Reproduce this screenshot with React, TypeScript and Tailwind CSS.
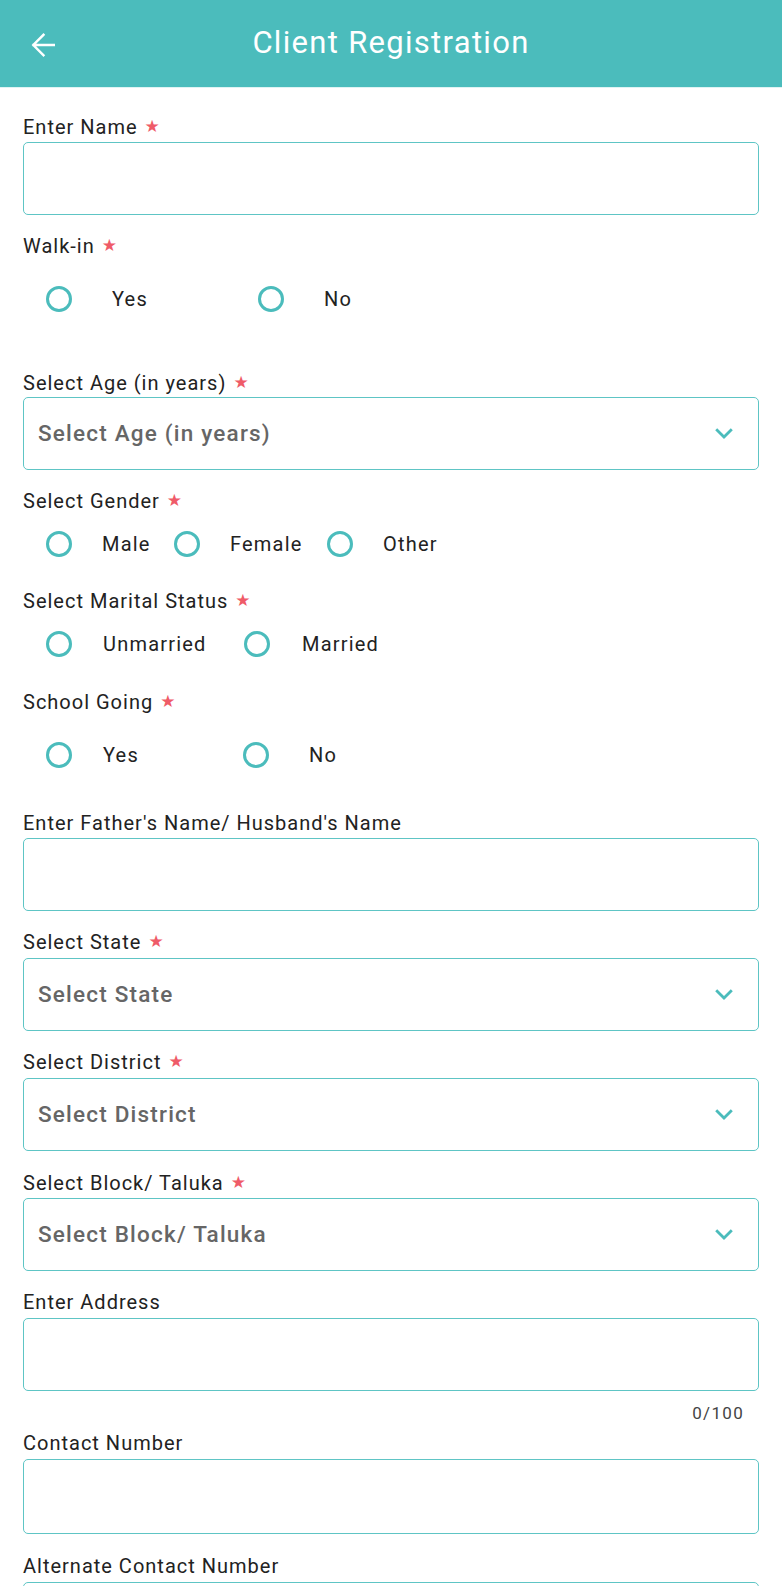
import React from "react";

const Star = () => (
  <span
    className="ml-[7px] text-[17px] text-[#ef5b68] leading-none relative top-[-1px]"
    style={{ fontFamily: '"DejaVu Sans", sans-serif' }}
  >
    ★
  </span>
);

const Label = ({ text, req, className = "" }: { text: string; req?: boolean; className?: string }) => (
  <div className={`flex items-center h-[24px] text-[20px] tracking-[1px] text-[#222] leading-[24px] ${className}`}>
    <span>{text}</span>
    {req && <Star />}
  </div>
);

const Input = ({ className = "" }: { className?: string }) => (
  <div className={`h-[73px] rounded-[5px] border-[1.5px] border-[#5ec5c5] bg-white ${className}`} />
);

const Select = ({ text, className = "" }: { text: string; className?: string }) => (
  <div
    className={`h-[73px] rounded-[5px] border-[1.5px] border-[#5ec5c5] bg-white flex items-center justify-between pl-[14px] pr-[25px] ${className}`}
  >
    <span className="text-[22.5px] tracking-[1.2px] font-medium text-[#666]">{text}</span>
    <svg width="18" height="12" viewBox="0 0 18 12" fill="none">
      <path d="M2.2 2.2 L9 9 L15.8 2.2" stroke="#4bbcbc" strokeWidth="2.8" strokeLinecap="square" />
    </svg>
  </div>
);

const Radio = ({ label, width, gap }: { label: string; width: string; gap: string }) => (
  <div className={`flex items-center ${width}`}>
    <div className="w-[26px] h-[26px] rounded-full border-[3px] border-[#4bbcbc] shrink-0" />
    <span className={`${gap} text-[20px] tracking-[1.2px] text-[#222]`}>{label}</span>
  </div>
);

export default function App() {
  return (
    <div
      className="w-[782px] h-[1586px] overflow-hidden bg-white"
      style={{ fontFamily: 'Roboto, "Liberation Sans", sans-serif' }}
    >
      <header className="h-[88px] bg-[#4bbcbc] border-b border-[#dff3f3] flex items-center justify-center relative">
        <div className="absolute left-[31px] top-[33px]">
          <svg width="24" height="24" viewBox="0 0 24 24" fill="none">
            <path d="M23 12H2.5 M12.5 1.8 L2.3 12 L12.5 22.2" stroke="white" strokeWidth="2.4" strokeLinecap="square" />
          </svg>
        </div>
        <span className="text-[31px] tracking-[1.3px] text-white">Client Registration</span>
      </header>

      <div className="px-[23px] pt-[27px] pb-[20px]">
        <Label text="Enter Name" req />
        <Input className="mt-[3px]" />

        <Label text="Walk-in" req className="mt-[19px]" />
        <div className="flex items-center h-[40px] mt-[21px] pl-[23px]">
          <Radio label="Yes" width="w-[212px]" gap="ml-[40px]" />
          <Radio label="No" width="w-[200px]" gap="ml-[40px]" />
        </div>

        <Label text="Select Age (in years)" req className="mt-[52px]" />
        <Select text="Select Age (in years)" className="mt-[2px]" />

        <Label text="Select Gender" req className="mt-[19px]" />
        <div className="flex items-center h-[40px] mt-[11px] pl-[23px]">
          <Radio label="Male" width="w-[128px]" gap="ml-[30px]" />
          <Radio label="Female" width="w-[153px]" gap="ml-[30px]" />
          <Radio label="Other" width="w-[150px]" gap="ml-[30px]" />
        </div>

        <Label text="Select Marital Status" req className="mt-[25px]" />
        <div className="flex items-center h-[40px] mt-[11px] pl-[23px]">
          <Radio label="Unmarried" width="w-[198px]" gap="ml-[31px]" />
          <Radio label="Married" width="w-[200px]" gap="ml-[32px]" />
        </div>

        <Label text="School Going" req className="mt-[26px]" />
        <div className="flex items-center h-[40px] mt-[21px] pl-[23px]">
          <Radio label="Yes" width="w-[197px]" gap="ml-[31px]" />
          <Radio label="No" width="w-[200px]" gap="ml-[40px]" />
        </div>

        <Label text="Enter Father's Name/ Husband's Name" className="mt-[36px]" />
        <Input className="mt-[3px]" />

        <Label text="Select State" req className="mt-[19px]" />
        <Select text="Select State" className="mt-[4px]" />

        <Label text="Select District" req className="mt-[19px]" />
        <Select text="Select District" className="mt-[4px]" />

        <Label text="Select Block/ Taluka" req className="mt-[20px]" />
        <Select text="Select Block/ Taluka" className="mt-[3px]" />

        <Label text="Enter Address" className="mt-[19px]" />
        <Input className="mt-[4px]" />
        <div className="flex justify-end pr-[15px] mt-[12px] h-[22px] items-center text-[17px] tracking-[1.3px] text-[#444]">
          0/100
        </div>

        <Label text="Contact Number" className="mt-[6px]" />
        <Input className="mt-[4px] h-[75px]" />

        <Label text="Alternate Contact Number" className="mt-[20px]" />
        <Input className="mt-[4px]" />
      </div>
    </div>
  );
}
